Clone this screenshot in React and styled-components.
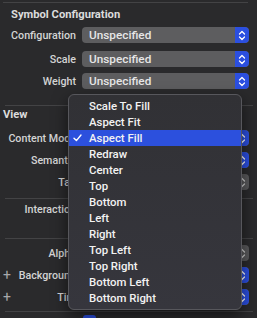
import React from "react";
import styled, { createGlobalStyle } from "styled-components";

const GlobalStyle = createGlobalStyle`
  html, body {
    margin: 0;
    padding: 0;
    background: #2a2a2c;
  }
  body {
    font-family: Roboto, "Liberation Sans", sans-serif;
    -webkit-font-smoothing: antialiased;
  }
`;

const Panel = styled.div`
  position: relative;
  width: 257px;
  height: 318px;
  overflow: hidden;
  box-sizing: border-box;
  padding-top: 2px;
  background: #2a2a2c;
  color: #d8d8d8;
`;

const Divider = styled.div`
  height: 1px;
  background: #434345;
  margin-top: ${(p) => p.$top || 0}px;
  margin-left: ${(p) => (p.$first ? 3 : 5)}px;
  margin-right: ${(p) => (p.$first ? 9 : 4)}px;
`;

const Heading = styled.div`
  height: 16px;
  line-height: 16px;
  margin-top: ${(p) => p.$top}px;
  padding-left: ${(p) => p.$indent}px;
  font-size: 11.2px;
  font-weight: 700;
  color: #dcdcdc;
`;

const Row = styled.div`
  display: grid;
  grid-template-columns: 76px 167px;
  column-gap: 6px;
  align-items: center;
  height: 16px;
  margin-top: ${(p) => p.$top}px;
`;

const Label = styled.div`
  display: flex;
  justify-content: space-between;
  align-items: center;
  font-size: 10.7px;
  font-weight: 500;
  color: #d4d4d4;
  white-space: nowrap;

  & span:last-child {
    margin-left: auto;
  }
`;

const Plus = styled.span`
  padding-left: 3px;
  font-size: 14px;
  font-weight: 400;
  color: #a8a8aa;
`;

const Popup = styled.div`
  display: flex;
  height: 16px;
  border-radius: 4px;
  background: #5d5d5f;
  overflow: hidden;
`;

const PopupText = styled.div`
  flex: 1;
  padding-left: 7px;
  line-height: 16px;
  font-size: 11.8px;
  font-weight: 500;
  color: #e6e6e6;
`;

const Stepper = styled.div`
  display: flex;
  align-items: center;
  justify-content: center;
  width: 14px;
  height: 16px;
  border-radius: ${(p) => (p.$alone ? "4px" : "0 4px 4px 0")};
  background: ${(p) => (p.$gray ? "#59595b" : "#2b4fe0")};
`;

const FieldWrap = styled.div`
  display: flex;
  gap: 3px;
`;

const Field = styled.div`
  flex: 1;
  height: 16px;
  box-sizing: border-box;
  border: 1px solid #4a4a4c;
  background: #333335;
`;

const CheckBox = styled.div`
  width: 13px;
  height: 13px;
  border-radius: 3px;
  background: #2b4fe0;
  margin-left: 83px;
  margin-top: 3px;
`;

const Menu = styled.div`
  position: absolute;
  left: 68px;
  top: 94px;
  width: 174px;
  box-sizing: border-box;
  padding: 3px 0;
  border: 1px solid #57575c;
  border-radius: 6px;
  background: linear-gradient(180deg, #313135 0%, #36363d 100%);
  box-shadow: 0 6px 16px rgba(0, 0, 0, 0.55);
`;

const MenuItem = styled.div`
  position: relative;
  height: 16px;
  line-height: 16px;
  padding-left: 20px;
  font-size: 11.4px;
  font-weight: 500;
  color: #f2f2f2;
  background: ${(p) => (p.$active ? "#2c50dd" : "transparent")};
`;

const Check = styled.svg`
  position: absolute;
  left: 4px;
  top: 4px;
`;

const Chevrons = ({ color = "#fff" }) => (
  <svg width="8" height="11" viewBox="0 0 8 11">
    <path
      d="M1.5 4 L4 1.5 L6.5 4 M1.5 7 L4 9.5 L6.5 7"
      fill="none"
      stroke={color}
      strokeWidth="1.3"
      strokeLinecap="round"
      strokeLinejoin="round"
    />
  </svg>
);

const PopupField = ({ value }) => (
  <Popup>
    <PopupText>{value}</PopupText>
    <Stepper>
      <Chevrons />
    </Stepper>
  </Popup>
);

const NumberField = () => (
  <FieldWrap>
    <Field />
    <Stepper $gray $alone>
      <Chevrons color="#cfcfcf" />
    </Stepper>
  </FieldWrap>
);

const modes = [
  "Scale To Fill",
  "Aspect Fit",
  "Aspect Fill",
  "Redraw",
  "Center",
  "Top",
  "Bottom",
  "Left",
  "Right",
  "Top Left",
  "Top Right",
  "Bottom Left",
  "Bottom Right",
];

const App = () => (
  <>
    <GlobalStyle />
    <Panel>
      <Divider $first />
      <Heading $top={4} $indent={11}>
        Symbol Configuration
      </Heading>
      <Row $top={4}>
        <Label>
          <span>Configuration</span>
        </Label>
        <PopupField value="Unspecified" />
      </Row>
      <Row $top={8}>
        <Label>
          <span>Scale</span>
        </Label>
        <PopupField value="Unspecified" />
      </Row>
      <Row $top={6}>
        <Label>
          <span>Weight</span>
        </Label>
        <PopupField value="Unspecified" />
      </Row>

      <Divider $top={16} />
      <Heading $top={1} $indent={3}>
        View
      </Heading>
      <Row $top={7}>
        <Label>
          <span>Content Mode</span>
        </Label>
        <PopupField />
      </Row>
      <Row $top={6}>
        <Label>
          <span>Semantic</span>
        </Label>
        <PopupField />
      </Row>
      <Row $top={6}>
        <Label>
          <span>Tag</span>
        </Label>
        <NumberField />
      </Row>

      <Divider $top={8} />
      <Row $top={2}>
        <Label>
          <span>Interaction</span>
        </Label>
        <div />
      </Row>
      <Row $top={2}>
        <Label />
        <div />
      </Row>

      <Divider $top={3} />
      <Row $top={6}>
        <Label>
          <span>Alpha</span>
        </Label>
        <NumberField />
      </Row>
      <Row $top={6}>
        <Label>
          <Plus>+</Plus>
          <span>Background</span>
        </Label>
        <PopupField />
      </Row>
      <Row $top={6}>
        <Label>
          <Plus>+</Plus>
          <span>Tint</span>
        </Label>
        <PopupField />
      </Row>
      <Divider $top={6} />
      <CheckBox />

      <Menu>
        {modes.map((m) => (
          <MenuItem key={m} $active={m === "Aspect Fill"}>
            {m === "Aspect Fill" && (
              <Check width="9" height="8" viewBox="0 0 9 8">
                <path
                  d="M1 4.2 L3.4 6.6 L8 1"
                  fill="none"
                  stroke="#fff"
                  strokeWidth="1.4"
                  strokeLinecap="round"
                  strokeLinejoin="round"
                />
              </Check>
            )}
            {m}
          </MenuItem>
        ))}
      </Menu>
    </Panel>
  </>
);

export default App;
